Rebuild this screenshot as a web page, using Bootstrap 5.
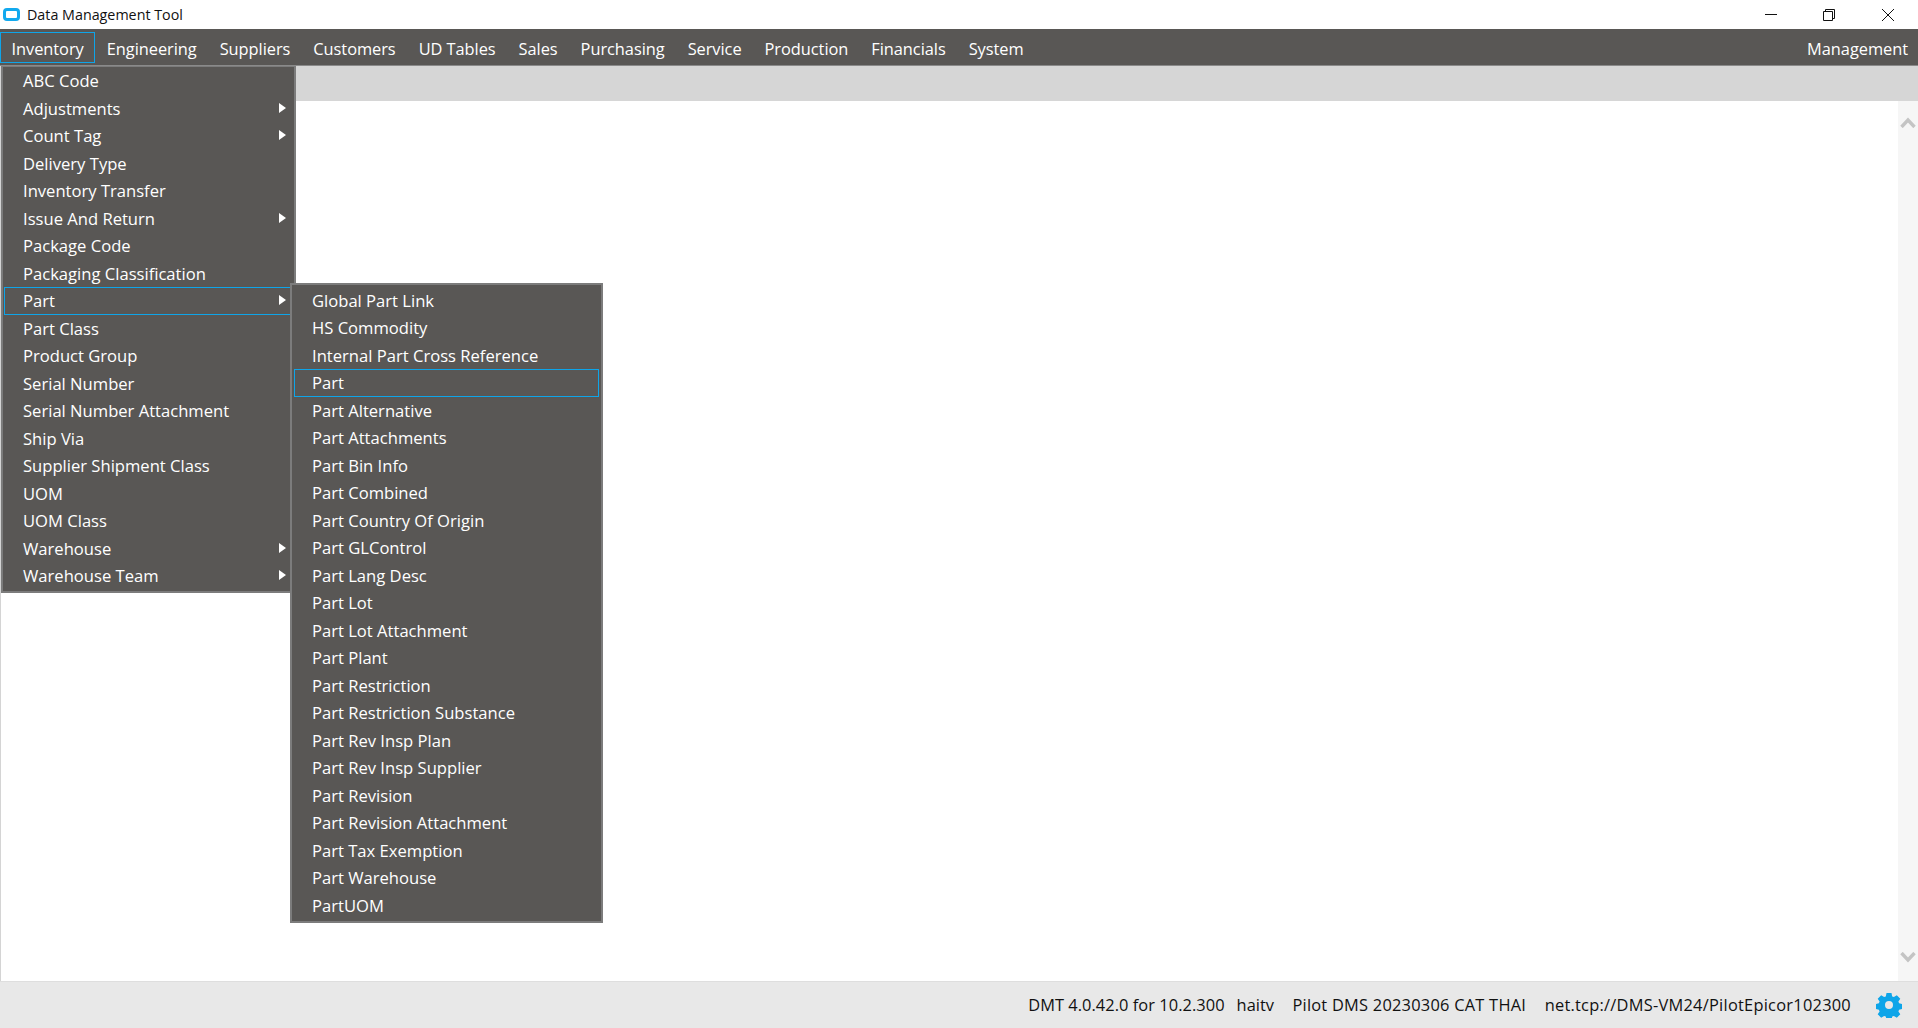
<!DOCTYPE html>
<html lang="en">
<head>
<meta charset="utf-8">
<title>Data Management Tool</title>
<link rel="stylesheet" href="https://cdn.jsdelivr.net/npm/bootstrap@5.3.0/dist/css/bootstrap.min.css">
<style>
html,body{height:100%;overflow:hidden}
body{font-family:"Open Sans","Noto Sans","Liberation Sans",sans-serif;font-size:16.4px;background:#fff;color:#1a1a1a}
.app-shell{height:1028px;position:relative}
.title-row{height:29px;font-size:14.3px;color:#111;padding-left:3px;padding-right:1px}
.title-row .win-ctl{width:58.5px;height:29px}
.app-mark{margin-right:7px}
.menu-strip{height:37px;background:#595755;border-bottom:1px solid #8a8a8a;color:#fff;padding-top:3px;padding-bottom:3px}
.top-item{height:31px;line-height:32px;padding:0 10.5px;border:1px solid transparent;color:#fff;text-decoration:none;white-space:nowrap;letter-spacing:-.05px}
.top-item.is-open{border-color:#0ea5e9}
.top-item.top-end{padding-right:9px}
.gray-strip{height:35px;background:#d6d6d6}
.work-area{height:880px;border-left:1px solid #d4d4d4}
.scroll-rail{width:20px;background:#f6f6f6;padding:16px 0 18px}
.status-strip{height:47px;background:#e8e8e8;border-top:1px solid #dedede;color:#111;padding-right:16px}
.stat-near{margin-right:12px;letter-spacing:.05px}
.stat-far{margin-right:18.5px}
.stat-wide{letter-spacing:.24px}
.stat-last{margin-right:25px;letter-spacing:.25px}
.fly-menu{--bs-dropdown-border-radius:0;--bs-dropdown-min-width:0;--bs-dropdown-padding-y:0;display:block;margin:0;background:#595755;border:2px solid #7c7c7c;border-radius:0;padding:0;position:absolute}
.fly-a{left:1px;top:66px;width:295px;height:527px;border-top-width:1px}
.fly-b{left:290px;top:283px;width:313px;height:640px;padding-top:1.5px;z-index:1001}
.fly-menu .dropdown-item{height:27.53px;line-height:26px;padding:0;color:#fff;background:transparent;border:1px solid transparent;position:relative;white-space:nowrap;font-size:16.6px}
.fly-a .dropdown-item{margin-left:1px;width:287px;padding-left:18px}
.fly-b .dropdown-item{margin-left:2px;width:305px;padding-left:17px}
.fly-menu .dropdown-item.is-hot{border-color:#0ea5e9}
.fly-a .dropdown-item.is-hot{border-right-color:transparent}
.has-sub::after{content:"";position:absolute;right:4px;top:7px;border-left:7px solid #fff;border-top:5.5px solid transparent;border-bottom:5.5px solid transparent}
</style>
</head>
<body>
<div class="app-shell d-flex flex-column">
  <div class="title-row d-flex align-items-center flex-shrink-0">
    <svg class="app-mark" width="17" height="13" viewBox="0 0 17 13"><rect x="1.5" y="1.5" width="14" height="10" rx="2.5" fill="#fff" stroke="#12a9ee" stroke-width="3"/></svg>
    <span>Data Management Tool</span>
    <div class="ms-auto d-flex">
      <div class="win-ctl d-flex align-items-center justify-content-center"><svg width="14" height="14" viewBox="0 0 14 14"><path d="M1 6.5h12" stroke="#111" fill="none"/></svg></div>
      <div class="win-ctl d-flex align-items-center justify-content-center"><svg width="14" height="14" viewBox="0 0 14 14"><path d="M1.5 3.5h9v9h-9zM3.5 3.5v-2h9v9h-2" stroke="#111" fill="none"/></svg></div>
      <div class="win-ctl d-flex align-items-center justify-content-center"><svg width="14" height="14" viewBox="0 0 14 14"><path d="M1 1l12 12M13 1L1 13" stroke="#111" fill="none"/></svg></div>
    </div>
  </div>
  <nav class="menu-strip d-flex align-items-center flex-shrink-0">
    <a class="top-item is-open" href="#">Inventory</a>
    <a class="top-item" href="#">Engineering</a>
    <a class="top-item" href="#">Suppliers</a>
    <a class="top-item" href="#">Customers</a>
    <a class="top-item" href="#">UD Tables</a>
    <a class="top-item" href="#">Sales</a>
    <a class="top-item" href="#">Purchasing</a>
    <a class="top-item" href="#">Service</a>
    <a class="top-item" href="#">Production</a>
    <a class="top-item" href="#">Financials</a>
    <a class="top-item" href="#">System</a>
    <a class="top-item top-end ms-auto" href="#">Management</a>
  </nav>
  <div class="gray-strip flex-shrink-0"></div>
  <div class="work-area d-flex flex-shrink-0">
    <div class="flex-grow-1"></div>
    <div class="scroll-rail d-flex flex-column justify-content-between align-items-center">
      <svg width="16" height="11" viewBox="0 0 16 11"><path d="M1.5 10L8 3l6.5 7" stroke="#c4c4c4" stroke-width="3.4" fill="none"/></svg>
      <svg width="16" height="11" viewBox="0 0 16 11"><path d="M1.5 1L8 8l6.5-7" stroke="#c4c4c4" stroke-width="3.4" fill="none"/></svg>
    </div>
  </div>
  <footer class="status-strip d-flex align-items-center justify-content-end flex-shrink-0">
    <span class="stat-near">DMT 4.0.42.0 for 10.2.300</span>
    <span class="stat-far">haitv</span>
    <span class="stat-far stat-wide">Pilot DMS 20230306 CAT THAI</span>
    <span class="stat-last">net.tcp://DMS-VM24/PilotEpicor102300</span>
    <svg width="26" height="26" viewBox="0 0 26 26"><path fill="#0ea5e9" fill-rule="evenodd" d="M10.5 1h5l.7 3.4 1.7.7 2.9-1.9 3.5 3.5-1.9 2.9.7 1.7 3.4.7v5l-3.4.7-.7 1.7 1.9 2.9-3.5 3.5-2.9-1.9-1.7.7-.7 3.4h-5l-.7-3.4-1.7-.7-2.9 1.9-3.5-3.5 1.9-2.9-.7-1.7-3.4-.7v-5l3.4-.7.7-1.7-1.9-2.9 3.5-3.5 2.9 1.9 1.7-.7zM13 9a4 4 0 100 8 4 4 0 000-8z"/></svg>
  </footer>

  <ul class="dropdown-menu fly-menu fly-a">
    <li><a class="dropdown-item" href="#">ABC Code</a></li>
    <li><a class="dropdown-item has-sub" href="#">Adjustments</a></li>
    <li><a class="dropdown-item has-sub" href="#">Count Tag</a></li>
    <li><a class="dropdown-item" href="#">Delivery Type</a></li>
    <li><a class="dropdown-item" href="#">Inventory Transfer</a></li>
    <li><a class="dropdown-item has-sub" href="#">Issue And Return</a></li>
    <li><a class="dropdown-item" href="#">Package Code</a></li>
    <li><a class="dropdown-item" href="#">Packaging Classification</a></li>
    <li><a class="dropdown-item has-sub is-hot" href="#">Part</a></li>
    <li><a class="dropdown-item" href="#">Part Class</a></li>
    <li><a class="dropdown-item" href="#">Product Group</a></li>
    <li><a class="dropdown-item" href="#">Serial Number</a></li>
    <li><a class="dropdown-item" href="#">Serial Number Attachment</a></li>
    <li><a class="dropdown-item" href="#">Ship Via</a></li>
    <li><a class="dropdown-item" href="#">Supplier Shipment Class</a></li>
    <li><a class="dropdown-item" href="#">UOM</a></li>
    <li><a class="dropdown-item" href="#">UOM Class</a></li>
    <li><a class="dropdown-item has-sub" href="#">Warehouse</a></li>
    <li><a class="dropdown-item has-sub" href="#">Warehouse Team</a></li>
  </ul>
  <ul class="dropdown-menu fly-menu fly-b">
    <li><a class="dropdown-item" href="#">Global Part Link</a></li>
    <li><a class="dropdown-item" href="#">HS Commodity</a></li>
    <li><a class="dropdown-item" href="#">Internal Part Cross Reference</a></li>
    <li><a class="dropdown-item is-hot" href="#">Part</a></li>
    <li><a class="dropdown-item" href="#">Part Alternative</a></li>
    <li><a class="dropdown-item" href="#">Part Attachments</a></li>
    <li><a class="dropdown-item" href="#">Part Bin Info</a></li>
    <li><a class="dropdown-item" href="#">Part Combined</a></li>
    <li><a class="dropdown-item" href="#">Part Country Of Origin</a></li>
    <li><a class="dropdown-item" href="#">Part GLControl</a></li>
    <li><a class="dropdown-item" href="#">Part Lang Desc</a></li>
    <li><a class="dropdown-item" href="#">Part Lot</a></li>
    <li><a class="dropdown-item" href="#">Part Lot Attachment</a></li>
    <li><a class="dropdown-item" href="#">Part Plant</a></li>
    <li><a class="dropdown-item" href="#">Part Restriction</a></li>
    <li><a class="dropdown-item" href="#">Part Restriction Substance</a></li>
    <li><a class="dropdown-item" href="#">Part Rev Insp Plan</a></li>
    <li><a class="dropdown-item" href="#">Part Rev Insp Supplier</a></li>
    <li><a class="dropdown-item" href="#">Part Revision</a></li>
    <li><a class="dropdown-item" href="#">Part Revision Attachment</a></li>
    <li><a class="dropdown-item" href="#">Part Tax Exemption</a></li>
    <li><a class="dropdown-item" href="#">Part Warehouse</a></li>
    <li><a class="dropdown-item" href="#">PartUOM</a></li>
  </ul>
</div>
<script src="https://cdn.jsdelivr.net/npm/bootstrap@5.3.0/dist/js/bootstrap.bundle.min.js"></script>
</body>
</html>
